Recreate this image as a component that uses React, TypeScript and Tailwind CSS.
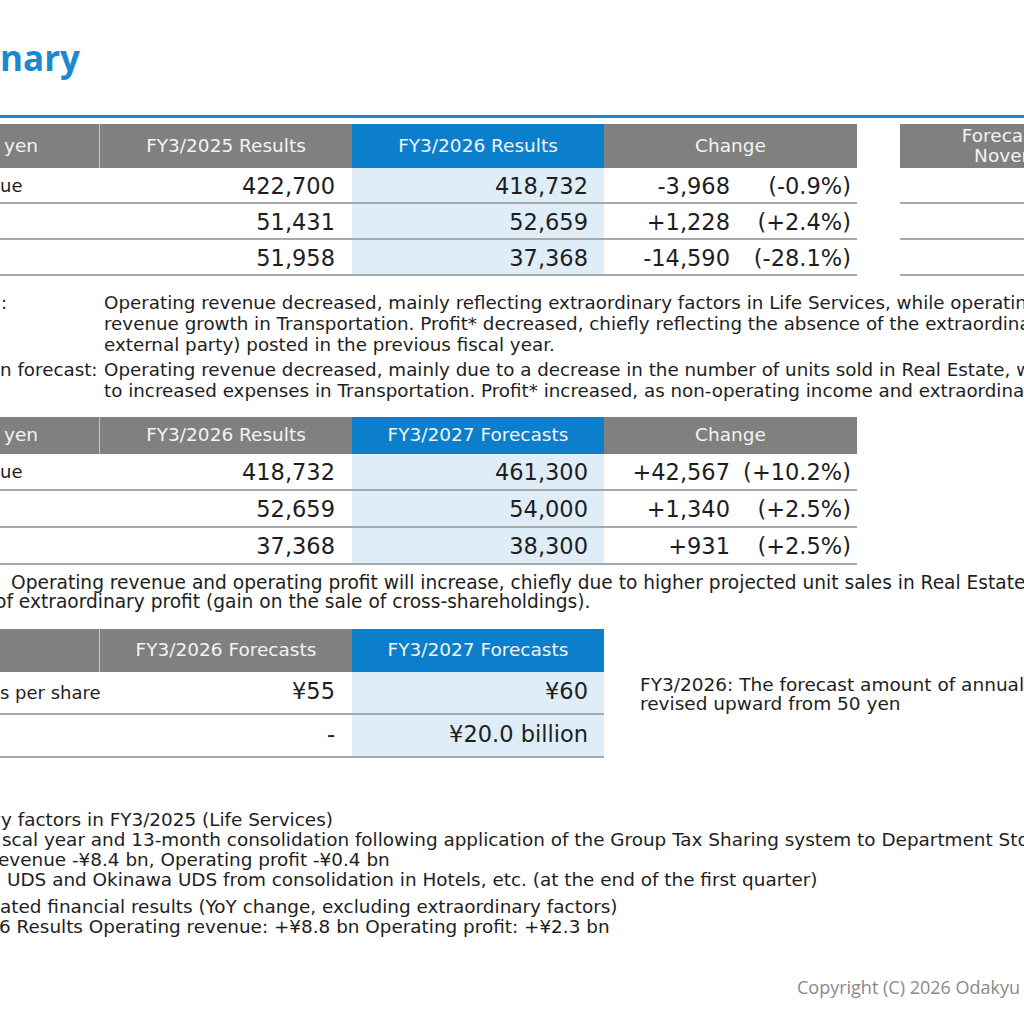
import React from 'react';

type CutProps = {
  hidden: string;
  children: React.ReactNode;
  className?: string;
  inner?: string;
};

// line of a slide that starts left of the visible area: the hidden part hangs off to the left
const Cut = ({ hidden, children, className = '', inner = '' }: CutProps) => (
  <div className={`flex whitespace-nowrap ${className}`}>
    <span className="flex w-0 shrink-0 justify-end">{hidden}</span>
    <span className={inner}>{children}</span>
  </div>
);

type HeadProps = {
  children?: React.ReactNode;
  blue?: boolean;
  className?: string;
};

const Head = ({ children, blue = false, className = '' }: HeadProps) => (
  <div
    className={`flex items-center justify-center text-[18.5px] text-[#f3f3f3] ${
      blue ? 'bg-[#0b7fcc]' : 'bg-[#808080]'
    } ${className}`}
  >
    {children}
  </div>
);

type Row = {
  label?: React.ReactNode;
  a: string;
  b: string;
  diff?: string;
  pct?: string;
};

type DataRowProps = {
  row: Row;
  height: string;
  change: boolean;
  nudge?: string;
};

const DataRow = ({ row, height, change, nudge = '' }: DataRowProps) => (
  <div className={`flex border-b-2 border-[#a8a8a8] text-[22.5px] ${height}`}>
    <div className="flex w-[100px] items-center text-[18px]">{row.label}</div>
    <div className={`flex w-[252px] items-center justify-end pr-[17px] ${nudge}`}>{row.a}</div>
    <div className={`flex w-[252px] items-center justify-end bg-[#deedf8] pr-[16px] ${nudge}`}>{row.b}</div>
    {change && (
      <div className={`flex w-[253px] items-center ${nudge}`}>
        <span className="w-[126px] text-right">{row.diff}</span>
        <span className="flex-1 pr-[6px] text-right">{row.pct}</span>
      </div>
    )}
  </div>
);

const revenueLabel = <Cut hidden="Operating reven">ue</Cut>;
const yenHead = (
  <Cut hidden={'Millions of\u00a0'} inner="pl-[4px]">
    yen
  </Cut>
);

const results: Row[] = [
  { label: revenueLabel, a: '422,700', b: '418,732', diff: '-3,968', pct: '(-0.9%)' },
  { a: '51,431', b: '52,659', diff: '+1,228', pct: '(+2.4%)' },
  { a: '51,958', b: '37,368', diff: '-14,590', pct: '(-28.1%)' },
];

const forecasts: Row[] = [
  { label: revenueLabel, a: '418,732', b: '461,300', diff: '+42,567', pct: '(+10.2%)' },
  { a: '52,659', b: '54,000', diff: '+1,340', pct: '(+2.5%)' },
  { a: '37,368', b: '38,300', diff: '+931', pct: '(+2.5%)' },
];

const dividends: Row[] = [
  { label: <Cut hidden="Dividend">s per share</Cut>, a: '¥55', b: '¥60' },
  { a: '-', b: '¥20.0 billion' },
];

export default function App() {
  return (
    <div className="relative h-[1024px] w-[1024px] overflow-hidden bg-white font-['DejaVu_Sans',sans-serif] text-[#1e1e1e]">
      {/* Title */}
      <div className="h-[115px] pt-[36px]">
        <Cut
          hidden="Sum"
          className="font-['Open_Sans',sans-serif] text-[35px] font-bold leading-[44px] text-[#1a88d2]"
        >
          nary
        </Cut>
      </div>
      <div className="h-[3px] bg-[#1e8ad3]" />

      {/* FY3/2026 results */}
      <div className="mt-[6px] flex">
        <div className="w-[857px]">
          <div className="flex h-[44px]">
            <Head className="w-[100px] justify-start border-r border-[#c4c4c4]">{yenHead}</Head>
            <Head className="w-[252px]">FY3/2025 Results</Head>
            <Head blue className="w-[252px]">FY3/2026 Results</Head>
            <Head className="w-[253px]">Change</Head>
          </div>
          {results.map((r, i) => (
            <DataRow key={i} row={r} height="h-[36px]" change nudge="pt-[4px]" />
          ))}
        </div>
        <div className="ml-[43px] w-[252px] shrink-0">
          <Head className="h-[44px] flex-col pl-[10px] text-[16.5px] leading-[20px]">
            <span>Forecasts as of</span>
            <span>November 7</span>
          </Head>
          <div className="h-[36px] border-b-2 border-[#a8a8a8]" />
          <div className="h-[36px] border-b-2 border-[#a8a8a8]" />
          <div className="h-[36px] border-b-2 border-[#a8a8a8]" />
        </div>
      </div>

      {/* Comments on results */}
      <div className="mt-[15.5px] text-[18.3px] leading-[21px]">
        <div className="flex">
          <Cut hidden="YoY comparison" className="w-[104px] shrink-0" inner="pl-[1px]">
            :
          </Cut>
          <div className="whitespace-nowrap">
            <div>Operating revenue decreased, mainly reflecting extraordinary factors in Life Services, while operating</div>
            <div>revenue growth in Transportation. Profit* decreased, chiefly reflecting the absence of the extraordinary</div>
            <div>external party) posted in the previous fiscal year.</div>
          </div>
        </div>
        <div className="mt-[4px] flex">
          <Cut hidden="Comparison with revisio" className="w-[104px] shrink-0">
            n forecast:
          </Cut>
          <div className="whitespace-nowrap">
            <div>Operating revenue decreased, mainly due to a decrease in the number of units sold in Real Estate, while</div>
            <div>to increased expenses in Transportation. Profit* increased, as non-operating income and extraordinary</div>
          </div>
        </div>
      </div>

      {/* FY3/2027 forecasts */}
      <div className="mt-[16px] w-[857px]">
        <div className="flex h-[37px]">
          <Head className="w-[100px] justify-start border-r border-[#c4c4c4]">{yenHead}</Head>
          <Head className="w-[252px]">FY3/2026 Results</Head>
          <Head blue className="w-[252px]">FY3/2027 Forecasts</Head>
          <Head className="w-[253px]">Change</Head>
        </div>
        {forecasts.map((r, i) => (
          <DataRow key={i} row={r} height="h-[37px]" change nudge="pt-[4px]" />
        ))}
      </div>
      <div className="mt-[8px] text-[18.6px] leading-[19px]">
        <Cut hidden="FY3/2027 forecasts:" inner="pl-[11px]">
          Operating revenue and operating profit will increase, chiefly due to higher projected unit sales in Real Estate, while
        </Cut>
        <Cut hidden={'Profit* will decrease due to the absence\u00a0'} className="-ml-[5px]">
          of extraordinary profit (gain on the sale of cross-shareholdings).
        </Cut>
      </div>

      {/* Dividends */}
      <div className="mt-[18px] flex">
        <div className="w-[604px] shrink-0">
          <div className="flex h-[43px]">
            <Head className="w-[100px] border-r border-[#c4c4c4]" />
            <Head className="w-[252px]">FY3/2026 Forecasts</Head>
            <Head blue className="w-[252px]">FY3/2027 Forecasts</Head>
          </div>
          {dividends.map((r, i) => (
            <DataRow key={i} row={r} height="h-[43px]" change={false} />
          ))}
        </div>
        <div className="ml-[36px] whitespace-nowrap pt-[46.5px] text-[18.5px] leading-[19px]">
          <div>FY3/2026: The forecast amount of annual dividends per share was</div>
          <div>revised upward from 50 yen</div>
        </div>
      </div>

      {/* Notes */}
      <div className="mt-[52px] text-[18.4px] leading-[20px]">
        <Cut hidden="*Extraordinar" inner="pl-[1px]">
          y factors in FY3/2025 (Life Services)
        </Cut>
        <Cut hidden="Change in fi" inner="pl-[2px]">
          scal year and 13-month consolidation following application of the Group Tax Sharing system to Department Stores
        </Cut>
        <Cut hidden="Operating r" className="-ml-[2px]">
          evenue -¥8.4 bn, Operating profit -¥0.4 bn
        </Cut>
        <Cut hidden="Exclusion of Kyoto" inner="pl-[7px]">
          UDS and Okinawa UDS from consolidation in Hotels, etc. (at the end of the first quarter)
        </Cut>
        <Cut hidden="Reference: Consolid" className="mt-[7px]">
          ated financial results (YoY change, excluding extraordinary factors)
        </Cut>
        <Cut hidden="FY3/202" className="-ml-[1px]">
          6 Results Operating revenue: +¥8.8 bn Operating profit: +¥2.3 bn
        </Cut>
      </div>

      {/* Footer */}
      <div className="mt-[39px] whitespace-nowrap pl-[797px] font-['Open_Sans',sans-serif] text-[18px] leading-[22px] text-[#8a8a8a]">
        Copyright (C) 2026 Odakyu Electric Railway Co., Ltd. All rights reserved.
      </div>
    </div>
  );
}
